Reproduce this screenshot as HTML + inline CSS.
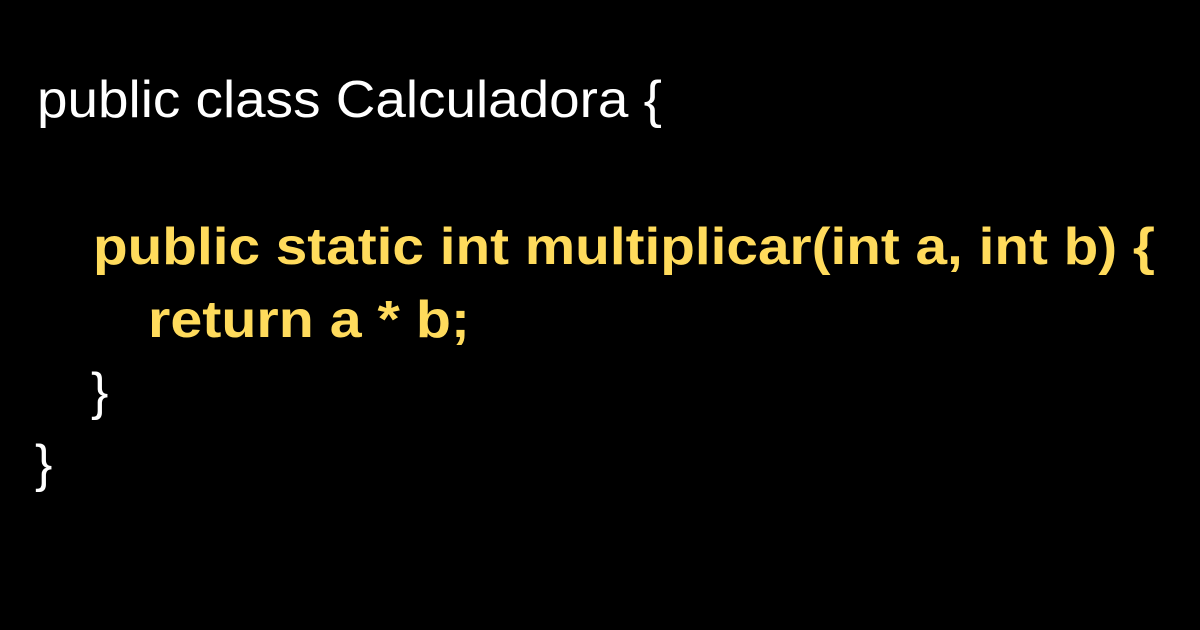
<!DOCTYPE html>
<html><head><meta charset="utf-8"><style>
html,body{margin:0;padding:0;background:#000;width:1200px;height:630px;overflow:hidden}
svg{display:block}
text{font-family:"Liberation Sans","DejaVu Sans",sans-serif;font-size:52px}
.w{fill:#fff}
.y{fill:#FFDB5C;font-weight:bold}
</style></head><body>
<svg width="1200" height="630" viewBox="0 0 1200 630">
<rect width="1200" height="630" fill="#000"/>
<text class="w" x="37" y="117" textLength="625" lengthAdjust="spacingAndGlyphs">public class Calculadora {</text>
<text class="y" x="93" y="264" textLength="1062" lengthAdjust="spacingAndGlyphs">public static int multiplicar(int a, int b) {</text>
<text class="y" x="148" y="337" textLength="322" lengthAdjust="spacingAndGlyphs">return a * b;</text>
<text class="w" x="91" y="409">}</text>
<text class="w" x="35" y="481">}</text>
</svg>
</body></html>
